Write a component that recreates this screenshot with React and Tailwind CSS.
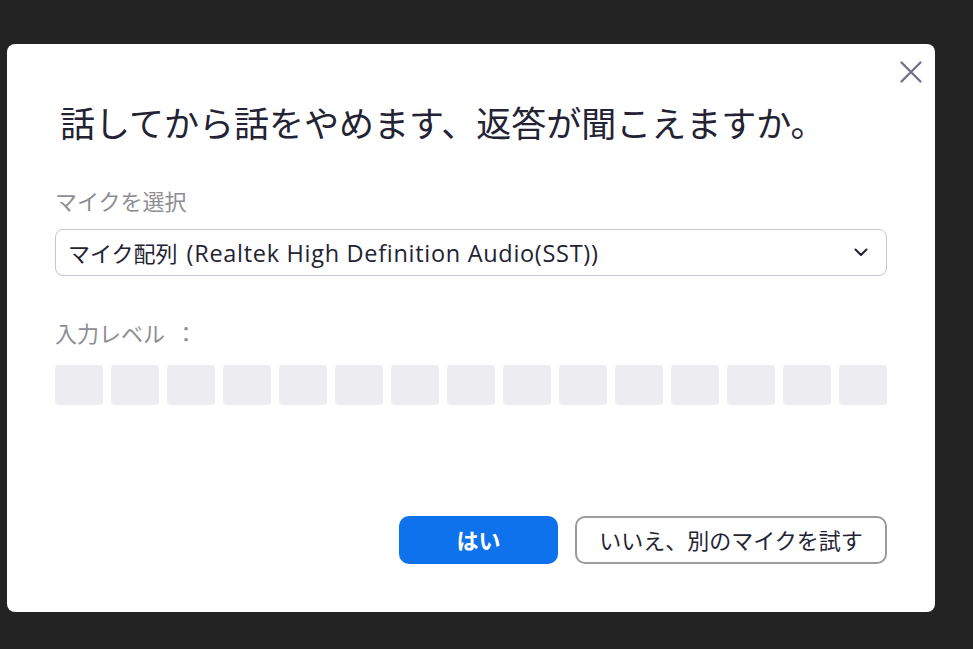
const font = { fontFamily: '"Open Sans", "Noto Sans CJK JP", sans-serif' };

function CloseIcon() {
  return (
    <svg width="22" height="22" viewBox="0 0 22 22" fill="none" stroke="#6e6e85" strokeWidth="2.2" strokeLinecap="round">
      <path d="M1.5 1.5 L20.5 20.5 M20.5 1.5 L1.5 20.5" />
    </svg>
  );
}

function Chevron() {
  return (
    <svg width="14" height="9" viewBox="0 0 14 9" fill="none" stroke="#232333" strokeWidth="2" strokeLinecap="round" strokeLinejoin="round">
      <path d="M1.5 1.5 L7 7 L12.5 1.5" />
    </svg>
  );
}

export default function App() {
  const bars = Array.from({ length: 15 });
  return (
    <div className="h-[649px] w-[973px] overflow-hidden bg-[#232323] pl-[7px] pt-[44px]" style={font}>
      <div className="relative flex h-[568px] w-[928px] flex-col rounded-lg bg-white px-12 pb-12">
        <button className="absolute right-[13px] top-[17px] p-0" aria-label="閉じる">
          <CloseIcon />
        </button>

        <h1 className="ml-[5px] mt-[58px] text-[35px] leading-[44px] font-normal text-[#232333]">
          話してから話をやめます、返答が聞こえますか。
        </h1>

        <div className="mt-[40px] text-[22px] leading-[30px] text-[#8e8e93]">マイクを選択</div>

        <div className="mt-[13px] flex h-[47px] items-center justify-between rounded-lg border border-[#c4c4d2] pl-3 pr-[18px]">
          <span className="text-[22px] leading-[30px] text-[#232333]">
            マイク配列
            <span className="ml-[9px] text-[23.5px] tracking-[0.7px]">(Realtek High Definition Audio(SST))</span>
          </span>
          <Chevron />
        </div>

        <div className="mt-[42px] text-[22px] leading-[30px] text-[#8e8e93]">
          入力レベル<span className="ml-[10px]">：</span>
        </div>

        <div className="mt-[17px] flex gap-2">
          {bars.map((_, i) => (
            <div key={i} className="h-10 w-12 rounded bg-[#ededf1]" />
          ))}
        </div>

        <div className="flex-1" />

        <div className="flex justify-end gap-[17px]">
          <button className="h-[48px] w-[159px] rounded-[10px] bg-[#0e72ed] text-[22px] font-bold text-white">はい</button>
          <button className="h-[48px] w-[312px] rounded-[10px] border-2 border-[#9a9a9f] text-[22px] text-[#232333]">
            いいえ、別のマイクを試す
          </button>
        </div>
      </div>
    </div>
  );
}
